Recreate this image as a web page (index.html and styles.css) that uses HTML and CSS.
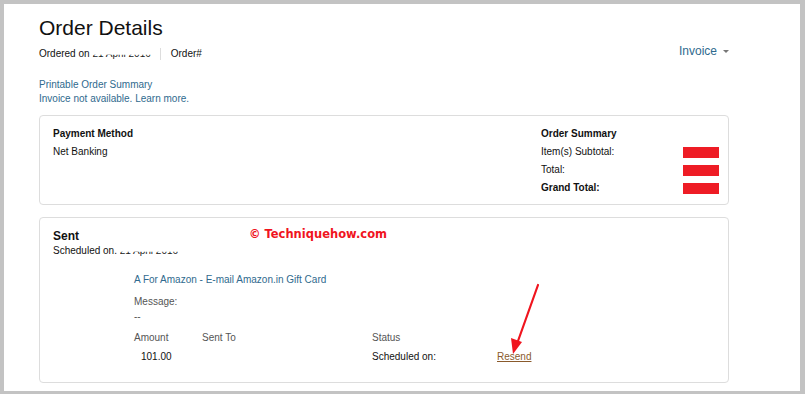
FILE: index.html
```html
<!DOCTYPE html>
<html lang="en">
<head>
  <meta charset="UTF-8" />
  <title>Order Details</title>
  <link rel="stylesheet" href="styles.css">
</head>
<body>
  <div class="page">
    <div class="container">
      <div class="header">
        <div class="header-left">
          <h1>Order Details</h1>
          <div class="meta">
            <span class="ordered">Ordered on <span class="blur">21 April 2016</span></span>
            <span class="sep"></span>
            <span>Order#</span>
          </div>
          <div class="links">
            <a href="#">Printable Order Summary</a>
            <a href="#">Invoice not available. Learn more.</a>
          </div>
        </div>
        <a class="invoice" href="#">Invoice <span class="caret"></span></a>
      </div>

      <div class="box summary-box">
        <div class="payment">
          <div class="row strong">Payment Method</div>
          <div class="row">Net Banking</div>
        </div>
        <div class="order-summary">
          <div class="row strong">Order Summary</div>
          <div class="row line"><span>Item(s) Subtotal:</span><span class="redact"></span></div>
          <div class="row line"><span>Total:</span><span class="redact"></span></div>
          <div class="row line strong"><span>Grand Total:</span><span class="redact"></span></div>
        </div>
      </div>

      <div class="box sent-box">
        <div class="sent-title">Sent</div>
        <div class="line14">Scheduled on. <span class="blur">21 April 2016</span></div>
        <span class="watermark">© Techniquehow.com</span>

        <div class="card">
          <a class="card-link" href="#">A For Amazon - E-mail Amazon.in Gift Card</a>
          <div class="line14 muted">Message:</div>
          <div class="line14 dash">--</div>
          <div class="grid">
            <span class="muted">Amount</span>
            <span class="muted">Sent To</span>
            <span class="muted">Status</span>
            <span></span>
            <span class="amount">101.00</span>
            <span></span>
            <span>Scheduled on:</span>
            <a class="resend" href="#">Resend</a>
          </div>
        </div>

        <svg class="arrow" width="60" height="80" viewBox="0 0 60 80">
          <line x1="46" y1="2" x2="26" y2="58" stroke="#f0141e" stroke-width="2.2" stroke-linecap="round"/>
          <polygon points="21,71 19,55 30,59" fill="#f0141e"/>
        </svg>
      </div>
    </div>
  </div>
</body>
</html>
```

FILE: styles.css
```css
* {
  margin: 0;
  padding: 0;
  box-sizing: border-box;
}

body {
  background: #c3c3c3;
  font-family: "Liberation Sans", Arial, sans-serif;
  font-size: 10px;
  color: #111;
  overflow: hidden;
}

a {
  color: #2f6a8e;
  text-decoration: none;
}

.page {
  margin: 4px 5px 3px 4px;
  height: 387px;
  background: #fff;
  padding: 12px 0 0 35px;
}

.container {
  width: 690px;
}

.header {
  display: flex;
  justify-content: space-between;
  align-items: flex-start;
}

h1 {
  font-size: 21px;
  line-height: 24px;
  font-weight: normal;
  color: #111;
}

.meta {
  display: flex;
  align-items: center;
  margin-top: 7px;
  line-height: 14px;
}

.blur {
  display: inline-block;
  color: #222;
  clip-path: inset(55% 0 0 0);
}

.sep {
  width: 1px;
  height: 12px;
  background: #ddd;
  margin: 0 10px 0 9px;
}

.links {
  display: flex;
  flex-direction: column;
  margin-top: 17px;
  line-height: 14px;
}

.invoice {
  font-size: 12px;
  line-height: 16px;
  margin-top: 27px;
  color: #2f6a8e;
  display: flex;
  align-items: center;
}

.caret {
  width: 0;
  height: 0;
  border-left: 3px solid transparent;
  border-right: 3px solid transparent;
  border-top: 3px solid #777;
  margin-left: 6px;
}

.box {
  border: 1px solid #ddd;
  border-radius: 4px;
  position: relative;
}

.summary-box {
  margin-top: 9px;
  height: 90px;
  display: flex;
  justify-content: space-between;
  padding: 9px 9px 0 13px;
}

.row {
  line-height: 18px;
}

.strong {
  font-weight: bold;
}

.order-summary {
  width: 178px;
}

.line {
  display: flex;
  justify-content: space-between;
  align-items: center;
}

.redact {
  width: 36px;
  height: 11px;
  background: #ee1c25;
}

.sent-box {
  margin-top: 12px;
  height: 166px;
  padding: 10px 13px 0 13px;
}

.sent-title {
  font-size: 12px;
  font-weight: bold;
  line-height: 16px;
}

.line14 {
  line-height: 14px;
}

.watermark {
  position: absolute;
  left: 209px;
  top: 9px;
  font-family: "DejaVu Sans", sans-serif;
  font-weight: bold;
  font-size: 11.5px;
  color: #f0141e;
}

.card {
  margin: 15px 0 0 81px;
}

.card-link {
  display: block;
  line-height: 14px;
}

.muted {
  color: #555;
}

.card > .muted {
  margin-top: 8px;
}

.dash {
  color: #555;
  margin-top: 1px;
}

.grid {
  display: grid;
  grid-template-columns: 68px 170px 125px auto;
  line-height: 19px;
  margin-top: 4px;
}

.amount {
  padding-left: 7px;
}

.resend {
  color: #8a5a2c;
  text-decoration: underline;
  justify-self: start;
}

.arrow {
  position: absolute;
  left: 452px;
  top: 65px;
}
```
